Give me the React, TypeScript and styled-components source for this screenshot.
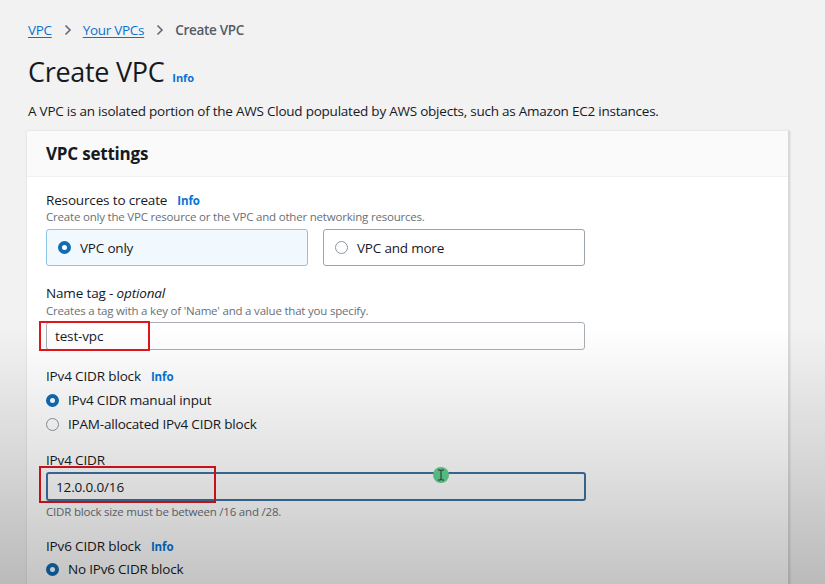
import React from "react";
import styled, { createGlobalStyle } from "styled-components";

const Global = createGlobalStyle`
  html, body { margin: 0; padding: 0; }
  body {
    background: #f2f2f2;
    font-family: "Open Sans", "Noto Sans", Arial, sans-serif;
    color: #16191f;
    width: 825px;
    height: 584px;
    overflow: hidden;
  }
`;

const Page = styled.div`
  position: relative;
  width: 825px;
  height: 584px;
  overflow: hidden;
  padding: 19px 0 0 28px;
  box-sizing: border-box;
`;

const Vignette = styled.div`
  position: absolute;
  inset: 0;
  pointer-events: none;
  background: linear-gradient(
    to bottom,
    rgba(0, 0, 0, 0) 0%,
    rgba(0, 0, 0, 0) 56%,
    rgba(0, 0, 0, 0.11) 78%,
    rgba(0, 0, 0, 0.23) 100%
  );
`;

const Crumbs = styled.nav`
  display: flex;
  align-items: center;
  font-size: 13.5px;
  font-weight: 600;
  line-height: 22px;
  letter-spacing: -0.3px;
`;

const CrumbLink = styled.a`
  color: #0972d3;
  text-decoration: underline;
  text-underline-offset: 2px;
  font-weight: 500;
`;

const CrumbCurrent = styled.span`
  color: #545b64;
`;

const Chevron = styled.svg`
  width: 12px;
  height: 12px;
  margin: 0 9px 0 10px;
`;

const TitleRow = styled.div`
  display: flex;
  align-items: baseline;
  margin-top: 16px;
  gap: 8px;
`;

const Title = styled.h1`
  margin: 0;
  font-size: 27px;
  font-weight: 400;
  line-height: 30px;
  letter-spacing: -0.3px;
  color: #16191f;
`;

const Info = styled.span<{ $size?: number }>`
  color: #0972d3;
  font-weight: 700;
  font-size: ${(p) => p.$size ?? 11}px;
  letter-spacing: -0.1px;
`;

const Desc = styled.p`
  margin: 14px 0 0 0;
  font-size: 13.5px;
  line-height: 20px;
  letter-spacing: -0.23px;
  color: #16191f;
`;

const Card = styled.section`
  margin: 10px 0 0 -1px;
  width: 763px;
  height: 470px;
  background: #fff;
  border-right: 2px solid #d9d9d9;
  box-shadow: 0 0 2px rgba(0, 0, 0, 0.12);
  box-sizing: border-box;
`;

const CardHeader = styled.header`
  height: 46px;
  display: flex;
  align-items: center;
  padding: 0 19px;
  background: #fafafa;
  border-bottom: 1px solid #f0f0f0;
  font-size: 17px;
  font-weight: 700;
  letter-spacing: -0.2px;
  box-sizing: border-box;
`;

const CardBody = styled.div`
  padding: 0 0 0 19px;
  width: 539px;
  box-sizing: content-box;
`;

const Field = styled.div<{ $mt: number }>`
  margin-top: ${(p) => p.$mt}px;
  display: flex;
  flex-direction: column;
`;

const Label = styled.div`
  display: flex;
  align-items: baseline;
  gap: 10px;
  font-size: 13.5px;
  line-height: 18px;
  letter-spacing: -0.15px;
  color: #16191f;
`;

const Helper = styled.div<{ $mt?: number }>`
  margin-top: ${(p) => p.$mt ?? 0}px;
  font-size: 11.5px;
  line-height: 14px;
  color: #687078;
  letter-spacing: -0.2px;
`;

const Tiles = styled.div`
  display: grid;
  grid-template-columns: 262px 262px;
  gap: 15px;
  margin-top: 5px;
`;

const Tile = styled.div<{ $selected?: boolean }>`
  height: 37px;
  box-sizing: border-box;
  display: flex;
  align-items: center;
  gap: 9px;
  padding-left: 11px;
  border-radius: 3px;
  border: 1px solid ${(p) => (p.$selected ? "#8fc3e6" : "#9ba3ab")};
  background: ${(p) => (p.$selected ? "#f1f8fe" : "#ffffff")};
  font-size: 13.5px;
  letter-spacing: -0.2px;
`;

const Radio = styled.span<{ $on?: boolean }>`
  width: 13px;
  height: 13px;
  border-radius: 50%;
  box-sizing: border-box;
  flex: none;
  border: ${(p) => (p.$on ? "4px solid #0f6cb6" : "1px solid #8d949c")};
  background: #fff;
`;

const Option = styled.div<{ $mt?: number }>`
  display: flex;
  align-items: center;
  gap: 9px;
  margin-top: ${(p) => p.$mt ?? 0}px;
  font-size: 13.5px;
  line-height: 20px;
  letter-spacing: -0.2px;
`;

const InputWrap = styled.div<{ $mt: number }>`
  position: relative;
  margin-top: ${(p) => p.$mt}px;
`;

const TextInput = styled.div<{ $focused?: boolean }>`
  height: ${(p) => (p.$focused ? 29 : 28)}px;
  box-sizing: border-box;
  border-radius: 3px;
  border: ${(p) => (p.$focused ? "2px solid #3d72a3" : "1px solid #a8aeb4")};
  background: ${(p) => (p.$focused ? "transparent" : "#ffffff")};
  display: flex;
  align-items: center;
  padding-left: 8px;
  font-size: 13.5px;
  letter-spacing: -0.15px;
  color: #16191f;
  width: ${(p) => (p.$focused ? 540 : 539)}px;
`;

const Highlight = styled.div<{ $l: number; $t: number; $w: number; $h: number }>`
  position: absolute;
  left: ${(p) => p.$l}px;
  top: ${(p) => p.$t}px;
  width: ${(p) => p.$w}px;
  height: ${(p) => p.$h}px;
  border: 2px solid #e3141c;
  box-sizing: border-box;
  pointer-events: none;
`;

const Cursor = styled.div`
  position: absolute;
  left: 387px;
  top: -5px;
  width: 16px;
  height: 16px;
  border-radius: 50%;
  background: #62d392;
  display: flex;
  align-items: center;
  justify-content: center;
`;

const ChevronIcon = () => (
  <Chevron viewBox="0 0 12 12">
    <path d="M3.5 1.5 L8 6 L3.5 10.5" fill="none" stroke="#5f6b7a" strokeWidth="1.6" />
  </Chevron>
);

export default function App() {
  return (
    <>
      <Global />
      <Page>
        <Crumbs>
          <CrumbLink>VPC</CrumbLink>
          <ChevronIcon />
          <CrumbLink>Your VPCs</CrumbLink>
          <ChevronIcon />
          <CrumbCurrent>Create VPC</CrumbCurrent>
        </Crumbs>
        <TitleRow>
          <Title>Create VPC</Title>
          <Info>Info</Info>
        </TitleRow>
        <Desc>
          A VPC is an isolated portion of the AWS Cloud populated by AWS objects, such as Amazon EC2 instances.
        </Desc>
        <Card>
          <CardHeader>VPC settings</CardHeader>
          <CardBody>
            <Field $mt={14}>
              <Label>
                Resources to create <Info $size={11.5}>Info</Info>
              </Label>
              <Helper>Create only the VPC resource or the VPC and other networking resources.</Helper>
              <Tiles>
                <Tile $selected>
                  <Radio $on />
                  VPC only
                </Tile>
                <Tile>
                  <Radio />
                  VPC and more
                </Tile>
              </Tiles>
            </Field>
            <Field $mt={18}>
              <Label>
                <span>
                  Name tag - <i>optional</i>
                </span>
              </Label>
              <Helper $mt={2}>Creates a tag with a key of 'Name' and a value that you specify.</Helper>
              <InputWrap $mt={4}>
                <TextInput>test-vpc</TextInput>
                <Highlight $l={-7} $t={-1} $w={111} $h={30} />
              </InputWrap>
            </Field>
            <Field $mt={17}>
              <Label>
                IPv4 CIDR block <Info $size={11.5}>Info</Info>
              </Label>
              <Option $mt={4}>
                <Radio $on />
                IPv4 CIDR manual input
              </Option>
              <Option $mt={4}>
                <Radio />
                IPAM-allocated IPv4 CIDR block
              </Option>
            </Field>
            <Field $mt={17}>
              <Label>IPv4 CIDR</Label>
              <InputWrap $mt={3}>
                <TextInput $focused>12.0.0.0/16</TextInput>
                <Highlight $l={-7} $t={-6} $w={177} $h={37} />
                <Cursor>
                  <svg width="8" height="12" viewBox="0 0 8 12">
                    <path d="M1 1 H3 Q4 1 4 2 V10 Q4 11 3 11 H1 M7 1 H5 Q4 1 4 2 M4 10 Q4 11 5 11 H7" fill="none" stroke="#333" strokeWidth="1" />
                  </svg>
                </Cursor>
              </InputWrap>
              <Helper $mt={4}>CIDR block size must be between /16 and /28.</Helper>
            </Field>
            <Field $mt={18}>
              <Label>
                IPv6 CIDR block <Info $size={11.5}>Info</Info>
              </Label>
              <Option $mt={3}>
                <Radio $on />
                No IPv6 CIDR block
              </Option>
            </Field>
          </CardBody>
        </Card>
        <Vignette />
      </Page>
    </>
  );
}
